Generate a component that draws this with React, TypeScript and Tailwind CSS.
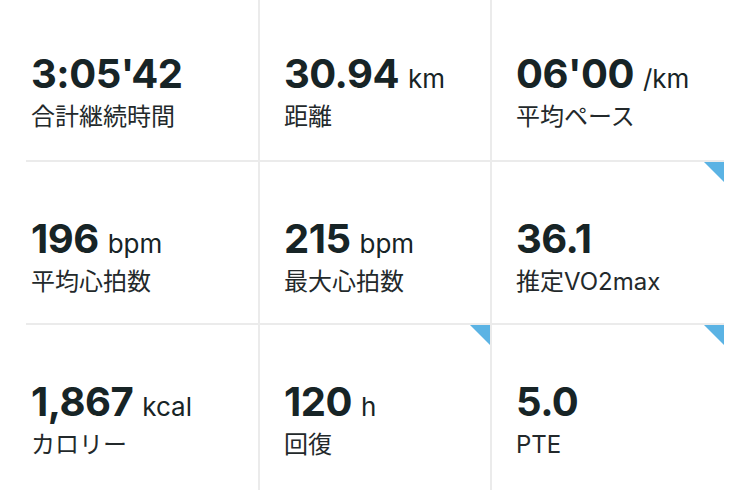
const stats = [
  { value: "3:05'42", unit: '', label: '合計継続時間', flag: false },
  { value: '30.94', unit: 'km', label: '距離', flag: false },
  { value: "06'00", unit: '/km', label: '平均ペース', flag: false },
  { value: '196', unit: 'bpm', label: '平均心拍数', flag: false },
  { value: '215', unit: 'bpm', label: '最大心拍数', flag: false },
  { value: '36.1', unit: '', label: '推定VO2max', flag: true },
  { value: '1,867', unit: 'kcal', label: 'カロリー', flag: false },
  { value: '120', unit: 'h', label: '回復', flag: true },
  { value: '5.0', unit: '', label: 'PTE', flag: true },
];

const App = () => {
  return (
    <div
      className="h-[490px] w-[750px] overflow-hidden bg-white px-[26px]"
      style={{ fontFamily: 'Inter, "Noto Sans CJK JP", sans-serif' }}
    >
      <div className="grid grid-cols-[234px_232px_232px] grid-rows-[162px_163px_200px]">
        {stats.map((stat, index) => {
          const col = index % 3;
          const row = Math.floor(index / 3);
          return (
            <div
              key={index}
              className={[
                'relative',
                col === 0 ? 'pl-[5px]' : 'pl-[24px]',
                col < 2 ? 'border-r-2 border-[#ebebeb]' : '',
                row < 2 ? 'border-b-2 border-[#ebebeb]' : '',
                row === 0 ? 'pt-[54px]' : 'pt-[57px]',
              ].join(' ')}
            >
              {stat.flag && (
                <div className="absolute right-0 top-0 h-0 w-0 border-l-[20px] border-t-[20px] border-l-transparent border-t-[#5bb3e4]" />
              )}
              <div className="flex items-baseline whitespace-nowrap text-[#172426]">
                <span className="text-[40px] font-bold leading-none tracking-[-0.5px]">{stat.value}</span>
                {stat.unit && <span className="ml-[9px] text-[26px] leading-none">{stat.unit}</span>}
              </div>
              <div className="mt-[9px] whitespace-nowrap text-[24px] leading-[28px] text-[#23292b]">{stat.label}</div>
            </div>
          );
        })}
      </div>
    </div>
  );
};

export default App;
